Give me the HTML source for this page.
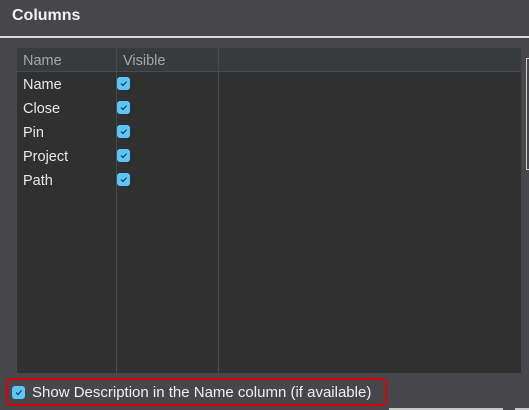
<!DOCTYPE html>
<html><head><style>
body{margin:0;width:529px;height:410px;background:#47464b;position:relative;overflow:hidden;font-family:"Liberation Sans",sans-serif;color:#e8e8e8}
.a{position:absolute}
.cb{position:absolute;width:13px;height:13px;background:#5ac8fa;border-radius:3px}
.cb svg{position:absolute;left:0;top:0}
.t{position:absolute;font-size:14.5px;line-height:16px}
</style></head><body>
<div class="a" style="left:12px;top:7px;font-size:16px;font-weight:bold;color:#f2f2f2">Columns</div>
<div class="a" style="left:0;top:36px;width:529px;height:2px;background:#d8d8d8"></div>
<div class="a" style="left:17px;top:48px;width:504px;height:325px;background:#303030"></div>
<div class="a" style="left:17px;top:48px;width:504px;height:23px;background:#373b3e;border-bottom:1px solid #4a4d50"></div>
<div class="a" style="left:116px;top:48px;width:1px;height:325px;background:#474a50"></div>
<div class="a" style="left:218px;top:48px;width:1px;height:325px;background:#474a50"></div>
<div class="t" style="left:23px;top:53px;color:#a6a8ab">Name</div>
<div class="t" style="left:123px;top:53px;color:#a6a8ab">Visible</div>
<div class="t" style="left:23px;top:77px">Name</div>
<div class="t" style="left:23px;top:101px">Close</div>
<div class="t" style="left:23px;top:125px">Pin</div>
<div class="t" style="left:23px;top:149px">Project</div>
<div class="t" style="left:23px;top:173px">Path</div>
<div class="cb" style="left:117px;top:77px"><svg width="13" height="13"><path d="M4 6.5l2 2 3.5-4" stroke="#1f3a4a" stroke-width="1.2" fill="none"/></svg></div>
<div class="cb" style="left:117px;top:101px"><svg width="13" height="13"><path d="M4 6.5l2 2 3.5-4" stroke="#1f3a4a" stroke-width="1.2" fill="none"/></svg></div>
<div class="cb" style="left:117px;top:125px"><svg width="13" height="13"><path d="M4 6.5l2 2 3.5-4" stroke="#1f3a4a" stroke-width="1.2" fill="none"/></svg></div>
<div class="cb" style="left:117px;top:149px"><svg width="13" height="13"><path d="M4 6.5l2 2 3.5-4" stroke="#1f3a4a" stroke-width="1.2" fill="none"/></svg></div>
<div class="cb" style="left:117px;top:173px"><svg width="13" height="13"><path d="M4 6.5l2 2 3.5-4" stroke="#1f3a4a" stroke-width="1.2" fill="none"/></svg></div>
<div class="a" style="left:526px;top:58px;width:4px;height:112px;border:1px solid #d0d0d0;box-sizing:border-box"></div>
<div class="a" style="left:6px;top:378px;width:381px;height:28px;border:2px solid #e00000;border-radius:6px;box-sizing:border-box"></div>
<div class="cb" style="left:12px;top:386px"><svg width="13" height="13"><path d="M4 6.5l2 2 3.5-4" stroke="#1f3a4a" stroke-width="1.2" fill="none"/></svg></div>
<div class="t" style="left:32px;top:385px;color:#f0f0f0;font-size:15px">Show Description in the Name column (if available)</div>
<div class="a" style="left:389px;top:408px;width:114px;height:2px;background:#c8c8c8"></div>
<div class="a" style="left:515px;top:408px;width:14px;height:2px;background:#c8c8c8"></div>
</body></html>
